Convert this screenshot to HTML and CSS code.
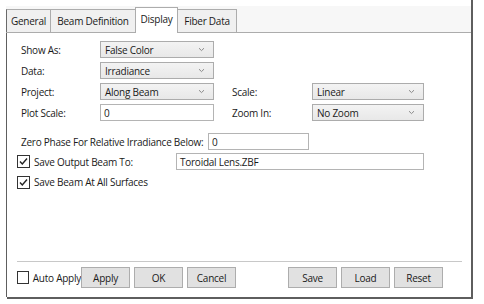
FILE: index.html
```html
<!DOCTYPE html>
<html>
<head>
<meta charset="utf-8">
<link rel="stylesheet" href="styles.css">
</head>
<body>
<div class="window">
  <div class="tabs">
    <div class="tab t-general">General</div>
    <div class="tab t-beam">Beam Definition</div>
    <div class="tab active t-display">Display</div>
    <div class="tab t-fiber">Fiber Data</div>
  </div>
  <div class="panel">
    <div class="grid">
      <div class="lbl">Show As:</div>
      <div class="combo"><span>False Color</span><svg class="chev" width="7" height="5" viewBox="0 0 7 5"><path d="M1 1.2 L3.5 3.6 L6 1.2" fill="none" stroke="#8a8a8a" stroke-width="1"/></svg></div>
      <div></div><div></div>
      <div class="lbl">Data:</div>
      <div class="combo"><span>Irradiance</span><svg class="chev" width="7" height="5" viewBox="0 0 7 5"><path d="M1 1.2 L3.5 3.6 L6 1.2" fill="none" stroke="#8a8a8a" stroke-width="1"/></svg></div>
      <div></div><div></div>
      <div class="lbl">Project:</div>
      <div class="combo"><span>Along Beam</span><svg class="chev" width="7" height="5" viewBox="0 0 7 5"><path d="M1 1.2 L3.5 3.6 L6 1.2" fill="none" stroke="#8a8a8a" stroke-width="1"/></svg></div>
      <div class="lbl rl">Scale:</div>
      <div class="combo"><span>Linear</span><svg class="chev" width="7" height="5" viewBox="0 0 7 5"><path d="M1 1.2 L3.5 3.6 L6 1.2" fill="none" stroke="#8a8a8a" stroke-width="1"/></svg></div>
      <div class="lbl">Plot Scale:</div>
      <div class="field">0</div>
      <div class="lbl rl">Zoom In:</div>
      <div class="combo"><span>No Zoom</span><svg class="chev" width="7" height="5" viewBox="0 0 7 5"><path d="M1 1.2 L3.5 3.6 L6 1.2" fill="none" stroke="#8a8a8a" stroke-width="1"/></svg></div>
    </div>
    <div class="row zero">
      <div class="lbl zl">Zero Phase For Relative Irradiance Below:</div>
      <div class="field zf">0</div>
    </div>
    <div class="row save">
      <label class="check cl"><span class="box"><svg width="11" height="11" viewBox="0 0 11 11"><path d="M2 5.5 L4.3 8 L9 2.5" fill="none" stroke="#222" stroke-width="1.4"/></svg></span>Save Output Beam To:</label>
      <div class="field sf">Toroidal Lens.ZBF</div>
    </div>
    <div class="row all">
      <label class="check"><span class="box"><svg width="11" height="11" viewBox="0 0 11 11"><path d="M2 5.5 L4.3 8 L9 2.5" fill="none" stroke="#222" stroke-width="1.4"/></svg></span>Save Beam At All Surfaces</label>
    </div>
    <div class="spacer"></div>
    <div class="sep"></div>
    <div class="footer">
      <label class="check auto"><span class="box"></span>Auto Apply</label>
      <button class="btn">Apply</button>
      <button class="btn">OK</button>
      <button class="btn">Cancel</button>
      <div class="fill"></div>
      <button class="btn">Save</button>
      <button class="btn">Load</button>
      <button class="btn">Reset</button>
    </div>
  </div>
</div>
</body>
</html>
```
FILE: styles.css
```css
html, body {
  margin: 0;
  padding: 0;
  background: #ffffff;
}
body {
  font-family: "Open Sans", "Noto Sans", sans-serif;
  font-size: 10px;
  letter-spacing: -0.25px;
  color: #1a1a1a;
  width: 484px;
  height: 304px;
  overflow: hidden;
}
.window {
  margin-left: 7px;
  width: 466px;
  height: 299px;
  box-sizing: border-box;
  display: flex;
  flex-direction: column;
  border-right: 2px solid #5e5e5e;
  border-bottom: 2px solid #5e5e5e;
}
.tabs {
  display: flex;
  align-items: flex-end;
  height: 33px;
  box-sizing: border-box;
  background: linear-gradient(#ffffff 0, #ffffff 6px, #f7f7f7 6px);
  border-bottom: 1px solid #acacac;
  margin-left: -1px;
}
.tab {
  height: 23px;
  box-sizing: border-box;
  display: flex;
  align-items: center;
  justify-content: center;
  background: #f0f0f0;
  border: 1px solid #acacac;
  border-bottom: none;
  margin-right: -1px;
  color: #1a1a1a;
}
.t-general { width: 45px; border-left: 1px solid #6a6a6a; }
.t-beam { width: 86px; }
.t-display { width: 43px; }
.t-fiber { width: 60px; }
.tab.active {
  height: 26px;
  background: #ffffff;
  margin-bottom: -1px;
  position: relative;
  padding-bottom: 3px;
}
.panel {
  flex: 1;
  display: flex;
  flex-direction: column;
  border-left: 1px solid #5e5e5e;
  margin-left: -1px;
  padding: 8px 0 9px 14px;
  background: #ffffff;
}
.grid {
  display: grid;
  grid-template-columns: 79px 114px 98px 112px;
  grid-auto-rows: 17px;
  row-gap: 4px;
}
.rl {
  padding-left: 18px;
}
.lbl {
  display: flex;
  align-items: center;
  white-space: nowrap;
}
.combo {
  display: flex;
  align-items: center;
  justify-content: space-between;
  box-sizing: border-box;
  height: 17px;
  border: 1px solid #acacac;
  background: linear-gradient(#f3f3f3, #e8e8e8);
  padding: 0 8px 0 4px;
}
.chev {
  display: block;
}
.field {
  display: flex;
  align-items: center;
  box-sizing: border-box;
  height: 17px;
  border: 1px solid #b4b4b4;
  background: #fff;
  padding: 0 3px;
}
.row {
  display: flex;
  align-items: center;
}
.zero {
  margin-top: 12px;
}
.zl {
  width: 187px;
}
.zf {
  width: 101px;
}
.save {
  margin-top: 3px;
  margin-left: -4px;
}
.cl {
  width: 159px;
}
.sf {
  width: 248px;
}
.all {
  margin-top: 5px;
  margin-left: -4px;
}
.check {
  display: flex;
  align-items: center;
  white-space: nowrap;
}
.box {
  width: 13px;
  height: 13px;
  box-sizing: border-box;
  border: 1px solid #333;
  background: #fff;
  margin-right: 4px;
  display: flex;
  align-items: center;
  justify-content: center;
}
.spacer {
  flex: 1;
}
.sep {
  height: 1px;
  background: #c8c8c8;
  margin: 0 9px 0 -4px;
}
.footer {
  display: flex;
  align-items: center;
  margin: 5px 0 0 -4px;
  padding-right: 24px;
  height: 21px;
}
.auto {
  width: 64px;
}
.btn {
  font: inherit;
  letter-spacing: inherit;
  color: #1a1a1a;
  height: 21px;
  width: 49px;
  box-sizing: border-box;
  border: 1px solid #adadad;
  background: #e1e1e1;
  margin-right: 4px;
  padding: 0;
}
.fill {
  flex: 1;
}
```
